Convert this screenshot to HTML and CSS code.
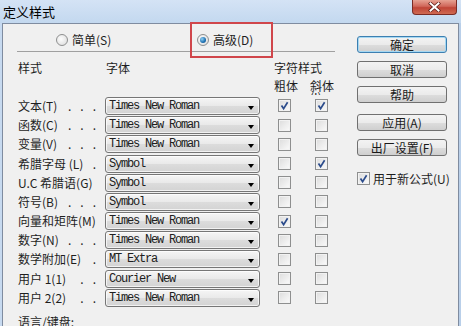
FILE: index.html
```html
<!DOCTYPE html>
<html lang="zh-CN">
<head>
    <meta charset="UTF-8">
    <meta name="viewport" content="width=device-width, initial-scale=1.0">
    <title>定义样式</title>
    <link rel="stylesheet" href="styles.css">
</head>
<body>
    <div class="window">
        <div class="titlebar">
            <span class="title">定义样式</span>
            <span class="close">
                <svg width="13" height="10" viewBox="0 0 13 10">
                    <path d="M2.5 1.5 L10.5 8.5 M10.5 1.5 L2.5 8.5" stroke="#5a1a14" stroke-width="3.4" stroke-linecap="square"/>
                    <path d="M2.5 1.5 L10.5 8.5 M10.5 1.5 L2.5 8.5" stroke="#fff" stroke-width="2" stroke-linecap="square"/>
                </svg>
            </span>
        </div>

        <div class="client">
            <div class="main">
                <div class="mode">
                    <label class="opt opt-first"><span class="radio"></span>简单(S)</label>
                    <label class="opt"><span class="radio on"></span>高级(D)</label>
                </div>

                <div class="heads">
                    <span class="h-style">样式</span>
                    <span class="h-font">字体</span>
                    <span class="h-char">字符样式</span>
                </div>
                <div class="subheads">
                    <span class="h-bold">粗体</span>
                    <span class="h-italic">斜体<br>(I)</span>
                </div>

                <div class="rows">
                    <div class="row">
                        <span class="name">文本(T)<span class="dots">...</span></span>
                        <div class="combo"><span>Times New Roman</span><i class="arrow"></i></div>
                        <span class="cb on"><svg viewBox="0 0 11 11"><path d="M2.5 5.5 L4.6 8.6 L8.6 2.2" fill="none" stroke="#2c4c8c" stroke-width="1.7"/></svg></span>
                        <span class="cb cb-it on"><svg viewBox="0 0 11 11"><path d="M2.5 5.5 L4.6 8.6 L8.6 2.2" fill="none" stroke="#2c4c8c" stroke-width="1.7"/></svg></span>
                    </div>
                    <div class="row">
                        <span class="name">函数(C)<span class="dots">...</span></span>
                        <div class="combo"><span>Times New Roman</span><i class="arrow"></i></div>
                        <span class="cb"></span>
                        <span class="cb cb-it"></span>
                    </div>
                    <div class="row">
                        <span class="name">变量(V)<span class="dots">...</span></span>
                        <div class="combo"><span>Times New Roman</span><i class="arrow"></i></div>
                        <span class="cb"></span>
                        <span class="cb cb-it"></span>
                    </div>
                    <div class="row">
                        <span class="name">希腊字母 (L)<span class="dots">.</span></span>
                        <div class="combo"><span>Symbol</span><i class="arrow"></i></div>
                        <span class="cb"></span>
                        <span class="cb cb-it on"><svg viewBox="0 0 11 11"><path d="M2.5 5.5 L4.6 8.6 L8.6 2.2" fill="none" stroke="#2c4c8c" stroke-width="1.7"/></svg></span>
                    </div>
                    <div class="row">
                        <span class="name">U.C 希腊语(G)</span>
                        <div class="combo"><span>Symbol</span><i class="arrow"></i></div>
                        <span class="cb"></span>
                        <span class="cb cb-it"></span>
                    </div>
                    <div class="row">
                        <span class="name">符号(B)<span class="dots">...</span></span>
                        <div class="combo"><span>Symbol</span><i class="arrow"></i></div>
                        <span class="cb"></span>
                        <span class="cb cb-it"></span>
                    </div>
                    <div class="row">
                        <span class="name">向量和矩阵(M)</span>
                        <div class="combo"><span>Times New Roman</span><i class="arrow"></i></div>
                        <span class="cb on"><svg viewBox="0 0 11 11"><path d="M2.5 5.5 L4.6 8.6 L8.6 2.2" fill="none" stroke="#2c4c8c" stroke-width="1.7"/></svg></span>
                        <span class="cb cb-it"></span>
                    </div>
                    <div class="row">
                        <span class="name">数字(N)<span class="dots">...</span></span>
                        <div class="combo"><span>Times New Roman</span><i class="arrow"></i></div>
                        <span class="cb"></span>
                        <span class="cb cb-it"></span>
                    </div>
                    <div class="row">
                        <span class="name">数学附加(E)<span class="dots">.</span></span>
                        <div class="combo"><span>MT Extra</span><i class="arrow"></i></div>
                        <span class="cb"></span>
                        <span class="cb cb-it"></span>
                    </div>
                    <div class="row">
                        <span class="name">用户 1(1)<span class="dots">..</span></span>
                        <div class="combo"><span>Courier New</span><i class="arrow"></i></div>
                        <span class="cb"></span>
                        <span class="cb cb-it"></span>
                    </div>
                    <div class="row">
                        <span class="name">用户 2(2)<span class="dots">..</span></span>
                        <div class="combo"><span>Times New Roman</span><i class="arrow"></i></div>
                        <span class="cb"></span>
                        <span class="cb cb-it"></span>
                    </div>
                </div>

                <div class="lang">语言/键盘:</div>
            </div>

            <div class="side">
                <div class="btn default">确定</div>
                <div class="btn">取消</div>
                <div class="btn">帮助</div>
                <div class="btn btn-gap">应用(A)</div>
                <div class="btn">出厂设置(F)</div>
                <label class="newf">
                    <span class="cb on"><svg viewBox="0 0 11 11"><path d="M2.5 5.5 L4.6 8.6 L8.6 2.2" fill="none" stroke="#2c4c8c" stroke-width="1.7"/></svg></span>
                    用于新公式(U)
                </label>
            </div>
        </div>

        <div class="mark"></div>
    </div>
</body>
</html>
```

FILE: styles.css
```css
body {
    margin: 0;
    width: 461px;
    height: 326px;
    overflow: hidden;
    font-family: "Noto Sans CJK SC", "Noto Sans", sans-serif;
    font-size: 12px;
    line-height: 14px;
    color: #1e1e1e;
}
.window {
    position: relative;
    width: 461px;
    height: 326px;
    overflow: hidden;
    background: linear-gradient(90deg, #c7daf0, #b9cfe9);
}
.titlebar {
    height: 23px;
    display: flex;
    align-items: flex-start;
    background: linear-gradient(#d4e3f5, #c3d8ef);
}
.title {
    padding: 5px 0 0 3px;
    font-size: 13px;
    line-height: 14px;
    color: #000;
}
.close {
    margin-left: auto;
    margin-right: 4px;
    width: 45px;
    height: 15px;
    box-sizing: border-box;
    border: 1px solid #7a2c25;
    border-top: none;
    border-radius: 0 0 4px 4px;
    background: linear-gradient(#e6a293, #d0675a 45%, #c04537 55%, #cf6a52);
    display: flex;
    align-items: center;
    justify-content: center;
}
.close svg {
    display: block;
}

.client {
    margin-left: 2px;
    width: 457px;
    height: 303px;
    box-sizing: border-box;
    border: 1px solid #7f8ca0;
    border-bottom: none;
    background: #f0f0f0;
    display: flex;
}
.main {
    width: 340px;
    padding-left: 15px;
    box-sizing: border-box;
}
.mode {
    margin-left: -1px;
    width: 318px;
    height: 28px;
    box-sizing: border-box;
    padding: 10px 0 0 39px;
    border-bottom: 1px solid #a0a0a0;
    display: flex;
}
.opt {
    display: flex;
    align-items: center;
    gap: 4px;
    height: 12px;
    line-height: 12px;
}
.opt-first {
    width: 141px;
}
.radio {
    width: 12px;
    height: 12px;
    box-sizing: border-box;
    border: 1px solid #8e8f8f;
    border-radius: 50%;
    background: radial-gradient(circle at 40% 40%, #fdfdfd, #d9d9d9);
    display: flex;
    align-items: center;
    justify-content: center;
}
.radio.on::after {
    content: "";
    width: 6px;
    height: 6px;
    border-radius: 50%;
    background: radial-gradient(circle at 35% 35%, #8fd0f5, #1d6fb0 60%, #0e4a86);
}

.heads {
    margin-top: 9px;
    height: 14px;
    display: flex;
}
.h-style {
    width: 88px;
}
.h-font {
    width: 168px;
}
.subheads {
    margin-top: 4px;
    height: 17.4px;
    padding-left: 256px;
    display: flex;
    line-height: 12px;
}
.h-bold {
    width: 36px;
    padding-top: 1px;
}
.h-italic {
    height: 16.4px;
    padding-top: 1px;
    box-sizing: border-box;
    overflow: hidden;
    line-height: 11px;
}

.row {
    height: 19.2px;
    display: flex;
    align-items: center;
}
.name {
    width: 87px;
    padding-right: 9px;
    box-sizing: border-box;
    display: flex;
    justify-content: space-between;
    white-space: nowrap;
    line-height: 14px;
}
.dots {
    letter-spacing: 9px;
    margin-right: -9px;
}
.combo {
    width: 155px;
    height: 18px;
    box-sizing: border-box;
    border: 1px solid #767676;
    border-radius: 3px;
    background: linear-gradient(#f5f5f5, #e9e9e9 50%, #dcdcdc 52%, #d3d3d3);
    box-shadow: inset 0 0 0 1px rgba(255, 255, 255, 0.7);
    display: flex;
    align-items: center;
    padding-left: 3px;
    font-family: "Liberation Mono", monospace;
    font-size: 12px;
    letter-spacing: -1.2px;
    line-height: 16px;
    color: #202020;
}
.arrow {
    margin-left: auto;
    margin-right: 5px;
    margin-top: 4px;
    width: 0;
    height: 0;
    border-left: 3.5px solid transparent;
    border-right: 3.5px solid transparent;
    border-top: 4px solid #000;
}
.cb {
    width: 13px;
    height: 13px;
    box-sizing: border-box;
    border: 1px solid #8e8f8f;
    background: linear-gradient(135deg, #dcdcdc, #fbfbfb);
    box-shadow: inset 0 0 0 1px #f2f2f2;
    margin-left: 18px;
    display: flex;
    align-items: center;
    justify-content: center;
    flex: none;
}
.cb svg {
    width: 11px;
    height: 11px;
    display: block;
}
.cb-it {
    margin-left: 24px;
}
.lang {
    margin-top: 7.6px;
}

.side {
    padding: 12px 0 0 14px;
}
.btn {
    width: 90px;
    height: 17px;
    box-sizing: border-box;
    margin-bottom: 8px;
    border: 1px solid #707070;
    border-radius: 3px;
    background: linear-gradient(#f3f3f3, #ebebeb 50%, #dddddd 52%, #cfcfcf);
    display: flex;
    align-items: center;
    justify-content: center;
    line-height: 12px;
    color: #1a1a1a;
}
.btn.default {
    border-color: #3c7fb1;
    box-shadow: inset 0 0 0 1px #a6d8f2;
}
.btn-gap {
    margin-top: 11px;
}
.newf {
    margin-top: 16px;
    display: flex;
    align-items: center;
    gap: 3px;
    line-height: 13px;
}
.newf .cb {
    margin-left: 0;
}

.mark {
    position: absolute;
    left: 190px;
    top: 22px;
    width: 83px;
    height: 36px;
    box-sizing: border-box;
    border: 2px solid #d0464b;
}
```
